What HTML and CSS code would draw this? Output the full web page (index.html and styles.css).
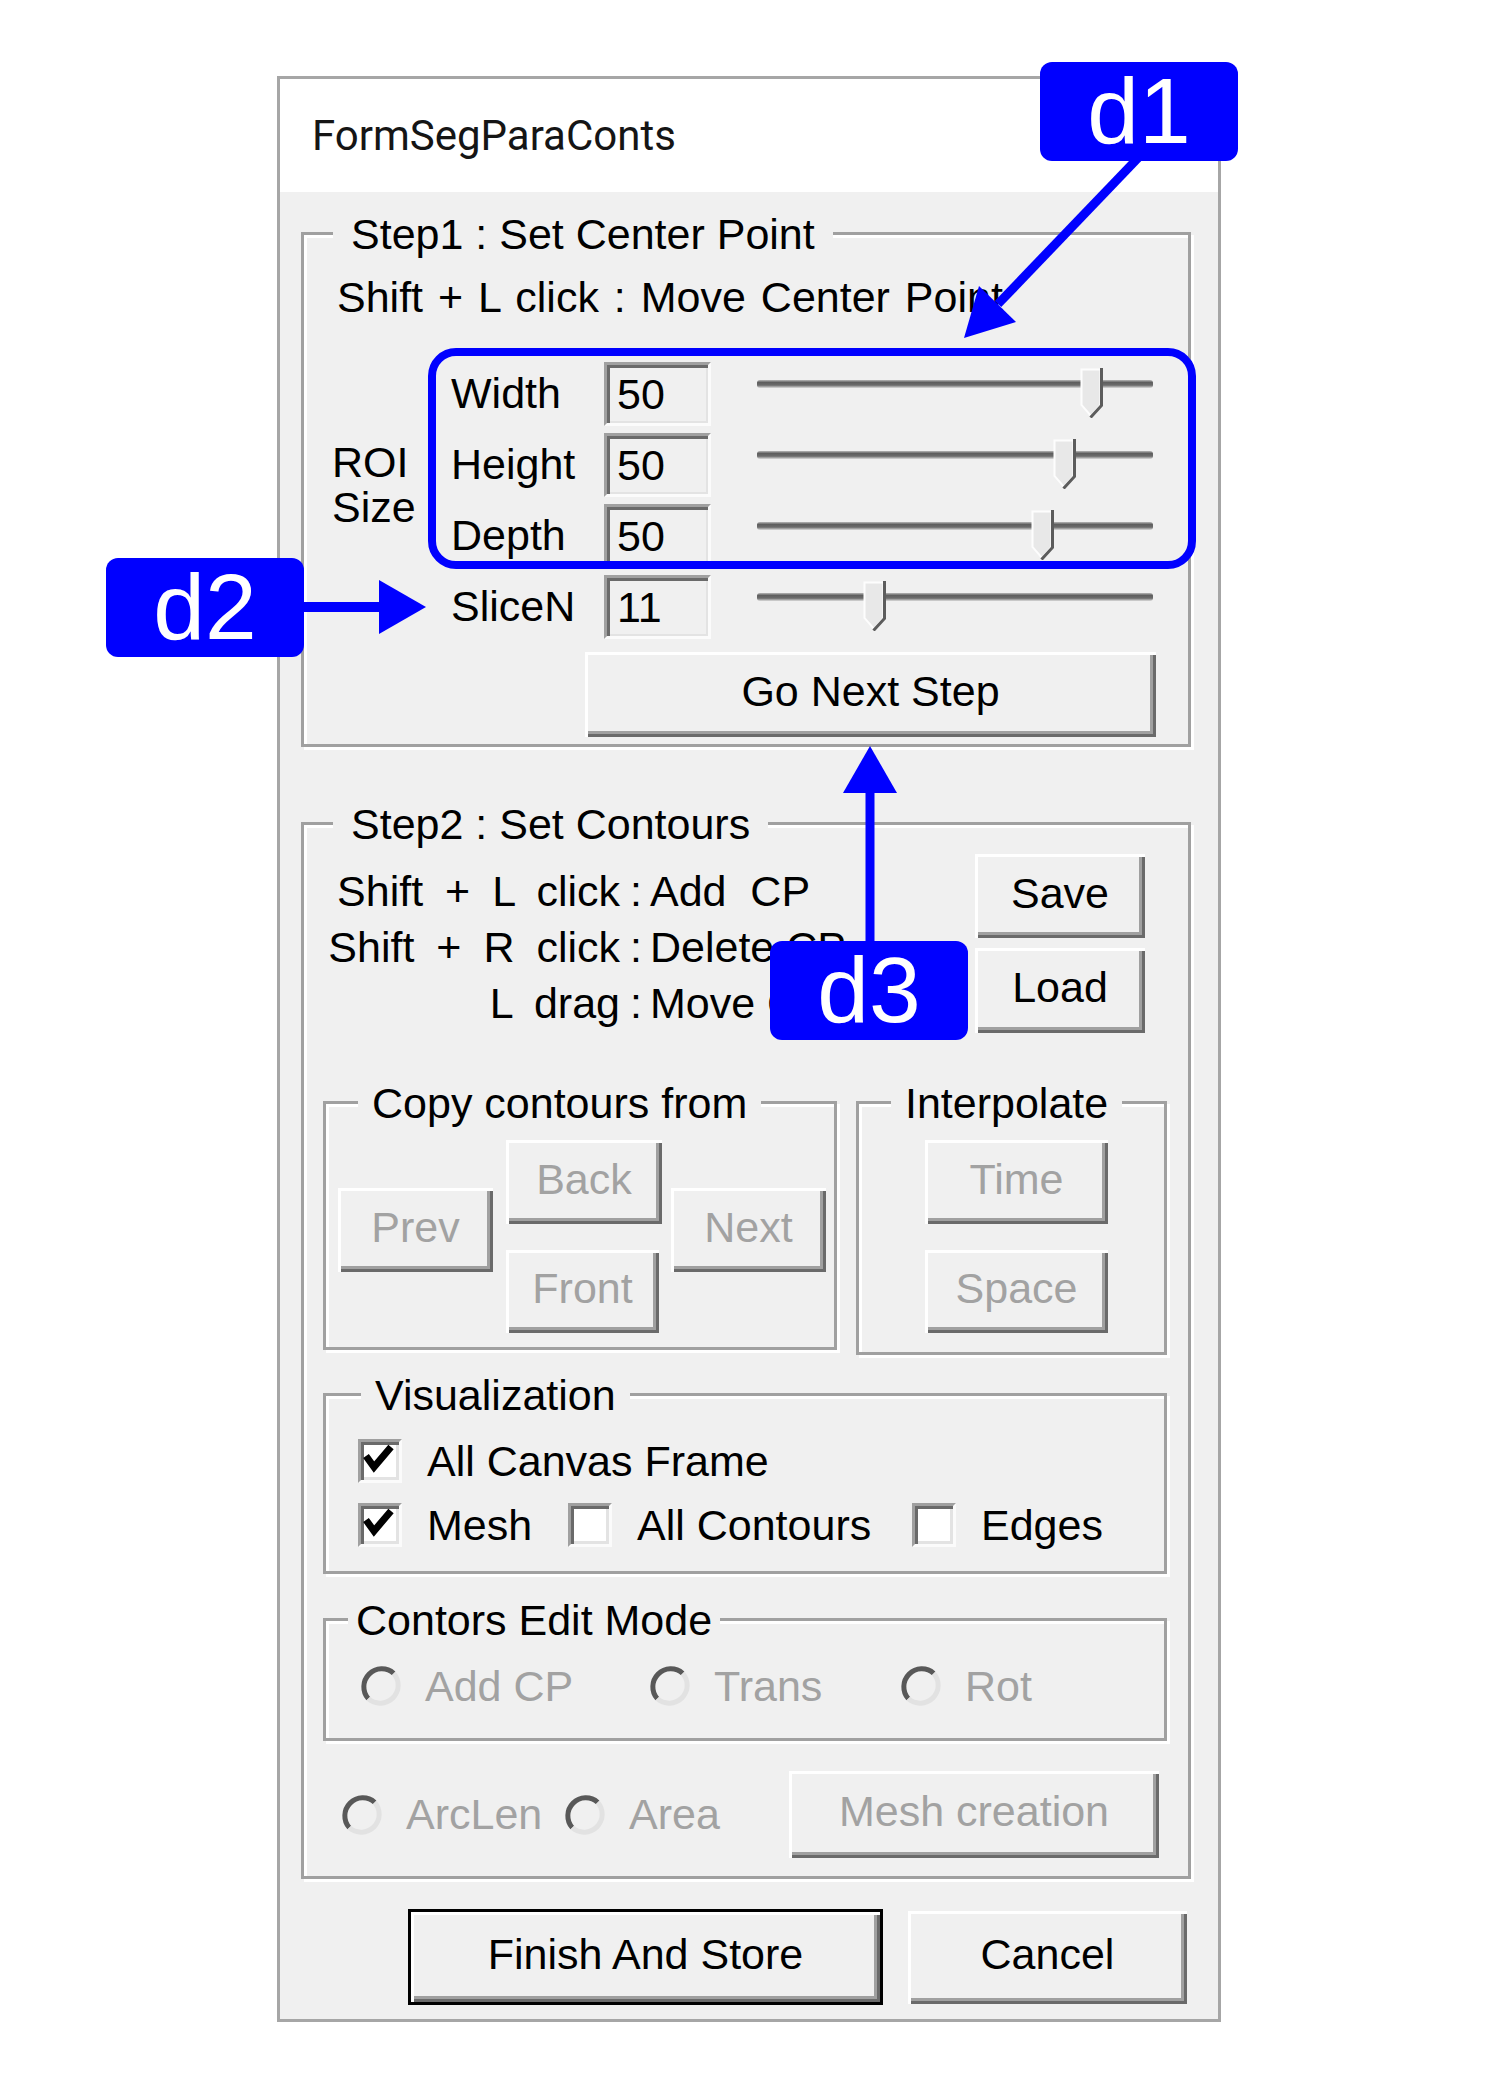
FILE: index.html
```html
<!DOCTYPE html>
<html lang="en">
<head>
<meta charset="utf-8">
<title>FormSegParaConts</title>
<link rel="stylesheet" href="styles.css">
</head>
<body>
<div class="window">
  <div class="titlebar">FormSegParaConts</div>
  <div class="client">

    <div class="group step1">
      <div class="legend">Step1 : Set Center Point</div>
      <div class="hint">Shift + L click : Move Center Point</div>
      <div class="roi">
        <div class="roi-label">ROI<br>Size</div>
        <div class="rows">
          <div class="row">
            <span class="rlabel">Width</span><span class="tbox">50</span>
            <div class="slider"><div class="track"></div>
              <svg class="thumb" style="left:323px" width="24" height="50" viewBox="0 0 24 50"><polygon points="1.5,1.5 20.5,1.5 20.5,37 11,48 1.5,37" fill="#e8e8e8" stroke="#fdfdfd" stroke-width="2"/><polyline points="21.5,0 21.5,37.5 10.5,49.5" fill="none" stroke="#5c5c5c" stroke-width="3"/></svg>
            </div>
          </div>
          <div class="row">
            <span class="rlabel">Height</span><span class="tbox">50</span>
            <div class="slider"><div class="track"></div>
              <svg class="thumb" style="left:296px" width="24" height="50" viewBox="0 0 24 50"><polygon points="1.5,1.5 20.5,1.5 20.5,37 11,48 1.5,37" fill="#e8e8e8" stroke="#fdfdfd" stroke-width="2"/><polyline points="21.5,0 21.5,37.5 10.5,49.5" fill="none" stroke="#5c5c5c" stroke-width="3"/></svg>
            </div>
          </div>
          <div class="row">
            <span class="rlabel">Depth</span><span class="tbox">50</span>
            <div class="slider"><div class="track"></div>
              <svg class="thumb" style="left:274px" width="24" height="50" viewBox="0 0 24 50"><polygon points="1.5,1.5 20.5,1.5 20.5,37 11,48 1.5,37" fill="#e8e8e8" stroke="#fdfdfd" stroke-width="2"/><polyline points="21.5,0 21.5,37.5 10.5,49.5" fill="none" stroke="#5c5c5c" stroke-width="3"/></svg>
            </div>
          </div>
          <div class="row">
            <span class="rlabel">SliceN</span><span class="tbox">11</span>
            <div class="slider"><div class="track"></div>
              <svg class="thumb" style="left:106px" width="24" height="50" viewBox="0 0 24 50"><polygon points="1.5,1.5 20.5,1.5 20.5,37 11,48 1.5,37" fill="#e8e8e8" stroke="#fdfdfd" stroke-width="2"/><polyline points="21.5,0 21.5,37.5 10.5,49.5" fill="none" stroke="#5c5c5c" stroke-width="3"/></svg>
            </div>
          </div>
        </div>
      </div>
      <button class="btn gonext">Go Next Step</button>
    </div>

    <div class="group step2">
      <div class="legend">Step2 : Set Contours</div>
      <div class="s2top">
        <div class="instr">
          <div class="iline"><span class="k">Shift + L click</span><span class="c">:</span><span class="v">Add  CP</span></div>
          <div class="iline"><span class="k">Shift + R click</span><span class="c">:</span><span class="v">Delete CP</span></div>
          <div class="iline"><span class="k">L drag</span><span class="c">:</span><span class="v">Move CP</span></div>
        </div>
        <div class="sl">
          <button class="btn save">Save</button>
          <button class="btn load">Load</button>
        </div>
      </div>

      <div class="s2mid">
        <div class="group copy">
          <div class="legend">Copy contours from</div>
          <div class="cbtns">
            <button class="btn dis prev">Prev</button>
            <div class="bf">
              <button class="btn dis back">Back</button>
              <button class="btn dis front">Front</button>
            </div>
            <button class="btn dis next">Next</button>
          </div>
        </div>
        <div class="group interp">
          <div class="legend">Interpolate</div>
          <div class="ibtns">
            <button class="btn dis time">Time</button>
            <button class="btn dis space">Space</button>
          </div>
        </div>
      </div>

      <div class="group vis">
        <div class="legend">Visualization</div>
        <div class="cbrow first">
          <div class="cb"><span class="box"><svg width="38" height="38" viewBox="0 0 38 38"><polyline points="5,14 13,25 30,5" fill="none" stroke="#000" stroke-width="7"/></svg></span>All Canvas Frame</div>
        </div>
        <div class="cbrow second">
          <div class="cb w1"><span class="box"><svg width="38" height="38" viewBox="0 0 38 38"><polyline points="5,14 13,25 30,5" fill="none" stroke="#000" stroke-width="7"/></svg></span>Mesh</div>
          <div class="cb w2"><span class="box"></span>All Contours</div>
          <div class="cb"><span class="box"></span>Edges</div>
        </div>
      </div>

      <div class="group cem">
        <div class="legend">Contors Edit Mode</div>
        <div class="rrow">
          <div class="rb r1"><svg class="radio" width="44" height="44" viewBox="0 0 44 44"><circle cx="22" cy="22" r="17" fill="#f0f0f0"/><path d="M9.3,34.7 A18,18 0 0 1 34.7,9.3" fill="none" stroke="#585858" stroke-width="5"/><path d="M34.7,9.3 A18,18 0 0 1 9.3,34.7" fill="none" stroke="#e2e2e2" stroke-width="5"/></svg>Add CP</div>
          <div class="rb r2"><svg class="radio" width="44" height="44" viewBox="0 0 44 44"><circle cx="22" cy="22" r="17" fill="#f0f0f0"/><path d="M9.3,34.7 A18,18 0 0 1 34.7,9.3" fill="none" stroke="#585858" stroke-width="5"/><path d="M34.7,9.3 A18,18 0 0 1 9.3,34.7" fill="none" stroke="#e2e2e2" stroke-width="5"/></svg>Trans</div>
          <div class="rb"><svg class="radio" width="44" height="44" viewBox="0 0 44 44"><circle cx="22" cy="22" r="17" fill="#f0f0f0"/><path d="M9.3,34.7 A18,18 0 0 1 34.7,9.3" fill="none" stroke="#585858" stroke-width="5"/><path d="M34.7,9.3 A18,18 0 0 1 9.3,34.7" fill="none" stroke="#e2e2e2" stroke-width="5"/></svg>Rot</div>
        </div>
      </div>

      <div class="s2bot">
        <div class="rb r3"><svg class="radio" width="44" height="44" viewBox="0 0 44 44"><circle cx="22" cy="22" r="17" fill="#f0f0f0"/><path d="M9.3,34.7 A18,18 0 0 1 34.7,9.3" fill="none" stroke="#585858" stroke-width="5"/><path d="M34.7,9.3 A18,18 0 0 1 9.3,34.7" fill="none" stroke="#e2e2e2" stroke-width="5"/></svg>ArcLen</div>
        <div class="rb"><svg class="radio" width="44" height="44" viewBox="0 0 44 44"><circle cx="22" cy="22" r="17" fill="#f0f0f0"/><path d="M9.3,34.7 A18,18 0 0 1 34.7,9.3" fill="none" stroke="#585858" stroke-width="5"/><path d="M34.7,9.3 A18,18 0 0 1 9.3,34.7" fill="none" stroke="#e2e2e2" stroke-width="5"/></svg>Area</div>
        <button class="btn dis mesh">Mesh creation</button>
      </div>
    </div>

    <div class="footer">
      <button class="btn default finish">Finish And Store</button>
      <button class="btn cancel">Cancel</button>
    </div>
  </div>
</div>

<svg class="annot" width="1500" height="2100" viewBox="0 0 1500 2100">
  <rect x="432" y="352" width="760" height="213" rx="24" ry="24" fill="none" stroke="#0000ff" stroke-width="8"/>
  <line x1="1138" y1="158" x2="998" y2="304" stroke="#0000ff" stroke-width="9"/>
  <polygon points="964,338 1016,322 979,286" fill="#0000ff"/>
  <line x1="300" y1="607" x2="382" y2="607" stroke="#0000ff" stroke-width="10"/>
  <polygon points="426,607 379,580 379,634" fill="#0000ff"/>
  <line x1="870" y1="945" x2="870" y2="790" stroke="#0000ff" stroke-width="9"/>
  <polygon points="870,746 843,793 897,793" fill="#0000ff"/>
</svg>
<div class="badge b1">d1</div>
<div class="badge b2">d2</div>
<div class="badge b3">d3</div>
</body>
</html>
```

FILE: styles.css
```css
* { box-sizing: border-box; }
html, body { margin: 0; padding: 0; }
body {
  background: #fff;
  width: 1500px;
  height: 2100px;
  overflow: hidden;
  padding: 76px 0 0 277px;
  font-family: "Liberation Sans", Arial, sans-serif;
  font-size: 43px;
  color: #000;
}
.window {
  width: 944px;
  height: 1946px;
  border: 3px solid #a6a6a6;
  background: #f0f0f0;
}
.titlebar {
  height: 113px;
  background: #fff;
  padding-left: 32px;
  display: flex;
  align-items: center;
  font-family: Roboto, "Liberation Sans", sans-serif;
  font-size: 42px;
  color: #151515;
}
.client { padding: 40px 0 0 21px; }

/* group boxes */
.group {
  border: 3px solid #a0a0a0;
  box-shadow: inset 3px 3px 0 #fff, 3px 3px 0 #fff;
}
.legend {
  display: block;
  width: fit-content;
  height: 50px;
  line-height: 50px;
  margin-top: -26px;
  background: #f0f0f0;
  white-space: pre;
}

.step1 { width: 890px; height: 515px; }
.step1 .legend, .step2 .legend { margin-left: 29px; padding: 0 18px; }
.hint { margin: 13px 0 0 33px; height: 50px; line-height: 50px; word-spacing: 3px; }
.roi { display: flex; margin-top: 40px; padding-left: 28px; }
.roi-label { width: 119px; padding-top: 78px; line-height: 45px; }
.rows { display: flex; flex-direction: column; gap: 7px; }
.row { display: flex; align-items: flex-start; height: 64px; }
.rlabel { width: 153px; line-height: 62px; }
.tbox {
  width: 107px;
  height: 64px;
  background: #f0f0f0;
  border-style: solid;
  border-width: 3px;
  border-color: #a0a0a0 #fbfbfb #fbfbfb #a0a0a0;
  box-shadow: inset 3px 3px 0 #6a6a6a, inset -2px -2px 0 #e3e3e3;
  padding-left: 10px;
  line-height: 58px;
}
.slider { position: relative; width: 396px; height: 64px; margin-left: 46px; }
.track {
  margin-top: 18px;
  height: 8px;
  border-radius: 3px;
  background: linear-gradient(#b8b8b8, #5e5e5e 30%, #6c6c6c 65%, #dcdcdc);
}
.thumb { position: absolute; top: 6px; }

.btn {
  display: block;
  margin: 0;
  padding: 0 0 6px 0;
  border: none;
  background: #f0f0f0;
  font: inherit;
  color: #000;
  text-align: center;
  box-shadow: inset 3px 3px 0 #fff, inset -3px -3px 0 #6a6a6a, inset -6px -6px 0 #a0a0a0;
}
.btn.dis { color: #a2a2a2; }
.gonext { width: 571px; height: 85px; margin: 13px 0 0 281px; }

/* step 2 */
.step2 { width: 890px; height: 1057px; margin-top: 75px; }
.s2top { display: flex; align-items: flex-start; height: 184px; }
.instr { padding-top: 14px; }
.iline { display: flex; height: 56px; line-height: 56px; white-space: pre; }
.iline .k { width: 316px; text-align: right; word-spacing: 10px; }
.iline .c { margin: 0 8px 0 10px; }
.sl { margin: 5px 43px 0 auto; display: flex; flex-direction: column; gap: 10px; }
.save { width: 170px; height: 84px; }
.load { width: 170px; height: 85px; }

.s2mid { display: flex; align-items: flex-start; gap: 19px; margin: 68px 0 0 19px; }
.copy { width: 514px; height: 249px; }
.interp { width: 311px; height: 254px; }
.copy .legend, .interp .legend { margin-left: 32px; padding: 0 14px; }
.cbtns { display: flex; align-items: flex-start; margin: 12px 0 0 12px; }
.prev { width: 155px; height: 84px; margin-top: 48px; }
.bf { display: flex; flex-direction: column; gap: 26px; margin-left: 13px; }
.back { width: 156px; height: 84px; }
.front { width: 153px; height: 83px; }
.next { width: 155px; height: 84px; margin: 48px 0 0 9px; }
.ibtns { display: flex; flex-direction: column; gap: 26px; margin: 12px 0 0 66px; }
.time { width: 183px; height: 84px; }
.space { width: 183px; height: 83px; }

.vis { width: 844px; height: 181px; margin: 38px 0 0 19px; }
.vis .legend { margin-left: 35px; padding: 0 14px; }
.cbrow { display: flex; align-items: center; height: 54px; margin-left: 32px; }
.cbrow.first { margin-top: 14px; }
.cbrow.second { margin-top: 10px; }
.cb { display: flex; align-items: center; }
.cb.w1 { width: 210px; }
.cb.w2 { width: 344px; }
.box {
  display: block;
  width: 44px;
  height: 44px;
  margin-right: 25px;
  background: #fff;
  border-style: solid;
  border-width: 3px;
  border-color: #a0a0a0 #fbfbfb #fbfbfb #a0a0a0;
  box-shadow: inset 3px 3px 0 #6a6a6a, inset -3px -3px 0 #e3e3e3;
}
.box svg { display: block; }

.cem { width: 844px; height: 123px; margin: 44px 0 0 19px; }
.cem .legend { margin-left: 22px; padding: 0 8px; }
.rrow { display: flex; align-items: center; height: 46px; margin: 18px 0 0 33px; }
.rb { display: flex; align-items: center; color: #a2a2a2; }
.rb .radio { display: block; margin-right: 22px; }
.rb.r1 { width: 289px; }
.rb.r2 { width: 251px; }

.s2bot { display: flex; align-items: center; height: 87px; margin: 30px 29px 0 36px; }
.rb.r3 { width: 223px; }
.mesh { width: 370px; height: 87px; margin-left: auto; }

.footer { display: flex; align-items: flex-start; gap: 25px; margin: 30px 0 0 107px; }
.finish { width: 475px; height: 96px; border: 3px solid #000; }
.cancel { width: 279px; height: 93px; margin-top: 2px; }

/* annotations */
.annot { position: absolute; left: 0; top: 0; pointer-events: none; }
.badge {
  position: absolute;
  width: 198px;
  height: 99px;
  border-radius: 12px;
  background: #0000ff;
  color: #fff;
  font-family: "Liberation Sans", Arial, sans-serif;
  font-size: 93px;
  line-height: 99px;
  text-align: center;
}
.b1 { left: 1040px; top: 62px; }
.b2 { left: 106px; top: 558px; }
.b3 { left: 770px; top: 941px; }
```
